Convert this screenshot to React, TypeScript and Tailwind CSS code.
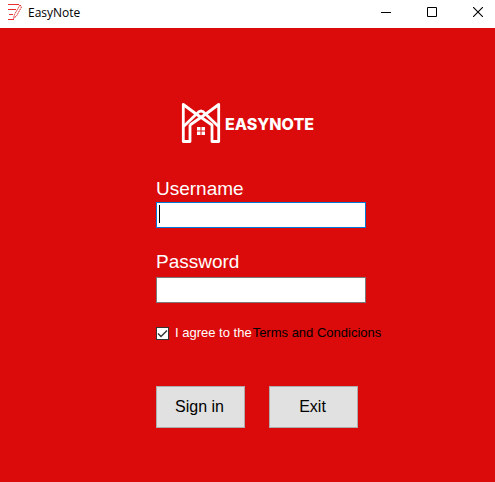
import React from "react";

function AppIcon() {
  return (
    <svg width="14" height="16" viewBox="0 0 14 16" fill="none" aria-hidden="true">
      <path d="M0 .5H11M0 5.5H8M1 10.5H5M0 15.5H6" stroke="#e83030" />
      <path d="M12 1L13.5 3L8.5 12L5.5 14.5L6.5 10.5Z" stroke="#e02020" strokeDasharray="1.5 0.7" />
    </svg>
  );
}

function LogoMark() {
  return (
    <svg width="40" height="42" viewBox="0 0 40 42" fill="none" aria-hidden="true">
      <g stroke="#fff" strokeWidth="2.8" strokeLinejoin="round">
        <path d="M9 22.5V39.5H2.3V2.5L14.5 11.5L31 23V39.5H37.7V2.5L25.5 11.5L9 23" />
        <path d="M2.5 24.5L15.5 12Q20 6 24.5 12L37.5 24.5" />
      </g>
      <path d="M16 25h3.5v3.5h-3.5zM20.5 25h3.5v3.5h-3.5zM16 29.5h3.5v3.5h-3.5zM20.5 29.5h3.5v3.5h-3.5z" fill="#fff" />
    </svg>
  );
}

function TitleBar() {
  return (
    <header className="flex h-7 items-center bg-white pb-1 pl-2 text-black">
      <AppIcon />
      <h1 className="ml-1.5 flex-1 pt-0.5 font-['Open_Sans',sans-serif] text-xs leading-4">EasyNote</h1>
      <button type="button" aria-label="Minimize" className="flex h-6 w-[46px] items-center justify-center">
        <svg width="10" height="10" viewBox="0 0 10 10"><path d="M0 5.5H10" stroke="#000" /></svg>
      </button>
      <button type="button" aria-label="Maximize" className="flex h-6 w-[46px] items-center justify-center">
        <svg width="10" height="10" viewBox="0 0 10 10" fill="none"><path d="M.5 .5H9.5V9.5H.5Z" stroke="#000" /></svg>
      </button>
      <button type="button" aria-label="Close" className="flex h-6 w-10 items-center pl-[18px]">
        <svg width="10" height="10" viewBox="0 0 10 10"><path d="M0 0L10 10M10 0L0 10" stroke="#000" strokeWidth="1.1" /></svg>
      </button>
    </header>
  );
}

export default function App() {
  return (
    <div className="flex min-h-screen flex-col bg-[#dc0b0b] font-['Liberation_Sans',Arial,sans-serif]">
      <TitleBar />
      <main className="pt-[74px]">
        <div className="flex items-center justify-center gap-1 text-white">
          <LogoMark />
          <span className="pt-0.5 font-['Inter',sans-serif] text-base font-extrabold leading-5">EASYNOTE</span>
        </div>
        <form className="ml-[156px] mt-[33px]" onSubmit={(e) => e.preventDefault()}>
          <label htmlFor="username" className="block text-[19px] leading-6 text-white">Username</label>
          <div className="relative mt-px w-[210px]">
            <input id="username" type="text" className="block h-[26px] w-full border border-[#0078d7] bg-white px-1 text-base outline-none" />
            <span aria-hidden="true" className="absolute left-[3px] top-[3px] h-[18px] w-px bg-black" />
          </div>
          <label htmlFor="password" className="mt-[22px] block text-[19px] leading-6 text-white">Password</label>
          <input id="password" type="password" className="mt-[3px] block h-[26px] w-[210px] border border-[#7a7a7a] bg-white px-1 text-base outline-none" />
          <div className="mt-[22px] flex items-center text-[13px] leading-4">
            <span className="relative flex">
              <input id="agree" type="checkbox" defaultChecked className="size-[13px] appearance-none border border-[#333] bg-white" />
              <svg aria-hidden="true" className="pointer-events-none absolute inset-0" width="13" height="13" viewBox="0 0 13 13" fill="none">
                <path d="M2 6.5L5 9.5L11 3.5" stroke="#333" strokeWidth="1.4" />
              </svg>
            </span>
            <label htmlFor="agree" className="ml-1.5 text-white">I agree to the</label>
            <a href="#terms" className="ml-px text-black">Terms and Condicions</a>
          </div>
          <div className="mt-[45px] flex gap-6 text-base text-black">
            <button type="submit" className="h-[42px] w-[89px] border border-[#adadad] bg-[#e1e1e1] pr-0.5">Sign in</button>
            <button type="button" className="h-[42px] w-[89px] border border-[#adadad] bg-[#e1e1e1] pr-0.5">Exit</button>
          </div>
        </form>
      </main>
    </div>
  );
}
